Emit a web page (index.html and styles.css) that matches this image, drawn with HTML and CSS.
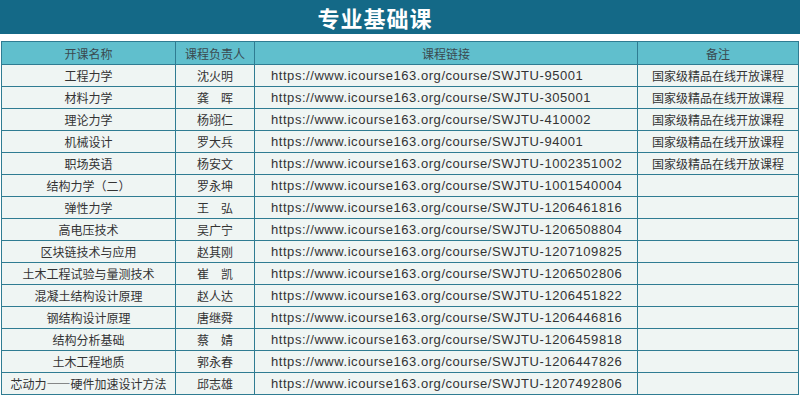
FILE: index.html
```html
<!DOCTYPE html>
<html lang="zh">
<head>
<meta charset="utf-8">
<link rel="stylesheet" href="styles.css">
</head>
<body>
<div class="banner"><h1 class="title">专业基础课</h1></div>
<table class="courses">
<colgroup><col class="c1"><col class="c2"><col class="c3"><col class="c4"></colgroup>
<thead>
<tr><th>开课名称</th><th>课程负责人</th><th>课程链接</th><th>备注</th></tr>
</thead>
<tbody>
<tr><td>工程力学</td><td>沈火明</td><td class="url">https://www.icourse163.org/course/SWJTU-95001</td><td>国家级精品在线开放课程</td></tr>
<tr><td>材料力学</td><td>龚　晖</td><td class="url">https://www.icourse163.org/course/SWJTU-305001</td><td>国家级精品在线开放课程</td></tr>
<tr><td>理论力学</td><td>杨翊仁</td><td class="url">https://www.icourse163.org/course/SWJTU-410002</td><td>国家级精品在线开放课程</td></tr>
<tr><td>机械设计</td><td>罗大兵</td><td class="url">https://www.icourse163.org/course/SWJTU-94001</td><td>国家级精品在线开放课程</td></tr>
<tr><td>职场英语</td><td>杨安文</td><td class="url">https://www.icourse163.org/course/SWJTU-1002351002</td><td>国家级精品在线开放课程</td></tr>
<tr><td>结构力学（二）</td><td>罗永坤</td><td class="url">https://www.icourse163.org/course/SWJTU-1001540004</td><td></td></tr>
<tr><td>弹性力学</td><td>王　弘</td><td class="url">https://www.icourse163.org/course/SWJTU-1206461816</td><td></td></tr>
<tr><td>高电压技术</td><td>吴广宁</td><td class="url">https://www.icourse163.org/course/SWJTU-1206508804</td><td></td></tr>
<tr><td>区块链技术与应用</td><td>赵其刚</td><td class="url">https://www.icourse163.org/course/SWJTU-1207109825</td><td></td></tr>
<tr><td>土木工程试验与量测技术</td><td>崔　凯</td><td class="url">https://www.icourse163.org/course/SWJTU-1206502806</td><td></td></tr>
<tr><td>混凝土结构设计原理</td><td>赵人达</td><td class="url">https://www.icourse163.org/course/SWJTU-1206451822</td><td></td></tr>
<tr><td>钢结构设计原理</td><td>唐继舜</td><td class="url">https://www.icourse163.org/course/SWJTU-1206446816</td><td></td></tr>
<tr><td>结构分析基础</td><td>蔡　婧</td><td class="url">https://www.icourse163.org/course/SWJTU-1206459818</td><td></td></tr>
<tr><td>土木工程地质</td><td>郭永春</td><td class="url">https://www.icourse163.org/course/SWJTU-1206447826</td><td></td></tr>
<tr><td>芯动力——硬件加速设计方法</td><td>邱志雄</td><td class="url">https://www.icourse163.org/course/SWJTU-1207492806</td><td></td></tr>
</tbody>
</table>
</body>
</html>
```
FILE: styles.css
```css
html, body {
  margin: 0;
  padding: 0;
  background: #ffffff;
  font-family: "Noto Sans CJK SC", "Liberation Sans", sans-serif;
  color: #333333;
}
.banner {
  height: 34px;
  background: #146987;
  display: flex;
  align-items: center;
  justify-content: center;
  padding-right: 50px;
  margin-bottom: 7px;
}
.title {
  margin: 0;
  font-size: 22px;
  font-weight: bold;
  color: #ffffff;
  letter-spacing: 1px;
  line-height: 1;
}
.courses {
  width: 797px;
  margin-left: 1px;
  border-collapse: collapse;
  table-layout: fixed;
  font-size: 12px;
}
.c1 { width: 174px; }
.c2 { width: 79px; }
.c3 { width: 383px; }
.c4 { width: 161px; }
.courses th, .courses td {
  border: 1px solid #2f7c92;
  height: 21px;
  padding: 0;
  text-align: center;
  white-space: nowrap;
  overflow: hidden;
  line-height: 21px;
}
.courses th {
  background: #60bfcd;
  font-weight: normal;
  height: 22px;
  color: #3a4a50;
}
.courses td {
  background: #eff5f3;
}
.courses td.url {
  text-align: left;
  padding-left: 16px;
  font-family: "Liberation Sans", sans-serif;
  font-size: 13px;
  letter-spacing: 0.55px;
}
```
